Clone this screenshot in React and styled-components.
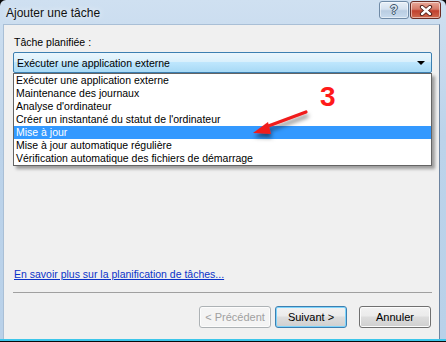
import React from 'react'
import styled, { createGlobalStyle } from 'styled-components';

const Global = createGlobalStyle`
    html, body {
        margin: 0;
        padding: 0;
        background: #0a0a0a;
    }
    body {
        width: 446px;
        height: 342px;
        overflow: hidden;
        font-family: "Liberation Sans", Arial, sans-serif;
    }
`;

const Window = styled.div`
    width: 446px;
    height: 339px;
    display: flex;
    flex-direction: column;
    background: linear-gradient(180deg, #cfe0f1 0%, #bcd3ea 40%, #b9d1e9 100%);
    border-bottom: 2px solid #3cc6ea;
    border-radius: 6px 6px 0 0;
`;

const TitleBar = styled.div`
    height: 24px;
    display: flex;
    align-items: flex-start;
    padding-left: 6px;
`;

const Title = styled.div`
    font-size: 12px;
    color: #111;
    margin-top: 6px;
    text-shadow: 0 0 6px rgba(255, 255, 255, 0.9);
`;

const Caption = styled.div`
    margin-left: auto;
    margin-right: 5px;
    margin-top: 1px;
    display: flex;
    gap: 1px;
`;

const CaptionButton = styled.div`
    height: 18px;
    width: ${p => p.$wide ? '31px' : '30px'};
    border: 1px solid ${p => p.$close ? '#6b2c24' : '#6f8aa6'};
    border-radius: 3px;
    box-sizing: border-box;
    display: flex;
    align-items: center;
    justify-content: center;
    background: ${p => p.$close
        ? 'linear-gradient(180deg, #e9a99a 0%, #d57a68 45%, #c1412f 55%, #cf6a4f 100%)'
        : 'linear-gradient(180deg, #e8f0f8 0%, #d4e1ef 45%, #b9cde2 55%, #c8dbee 100%)'};
    box-shadow: inset 0 0 0 1px rgba(255,255,255,0.5);
`;

const Help = styled.span`
    font-size: 12px;
    font-weight: bold;
    color: #dfe9f4;
    text-shadow: 0 0 1px #44576b, 1px 0 0 #44576b, -1px 0 0 #44576b, 0 1px 0 #44576b, 0 -1px 0 #44576b;
    line-height: 1;
`;

const Client = styled.div`
    flex: 1;
    margin: 0 6px 0 3px;
    background: #f0f0f0;
    border-left: 1px solid #a9bfd6;
    border-right: 1px solid #6d84a0;
    border-top: 1px solid #a9bfd6;
    display: flex;
    flex-direction: column;
    padding: 11px 7px 11px 9px;
    font-size: 10.5px;
    color: #000;
`;

const Top = styled.div`
    position: relative;
`;

const Label = styled.div`
    line-height: 13px;
    margin-left: 1px;
    margin-bottom: 3px;
`;

const Combo = styled.div`
    position: relative;
`;

const Select = styled.div`
    height: 21px;
    box-sizing: border-box;
    border: 1px solid #3c7fb1;
    border-radius: 2px;
    background: linear-gradient(180deg, #eaf6fd 0%, #d9f0fc 45%, #bee6fd 50%, #a7d9f5 100%);
    display: flex;
    align-items: center;
    padding: 0 6px 0 3px;
`;

const Arrow = styled.span`
    margin-left: auto;
    width: 0;
    height: 0;
    border-left: 4px solid transparent;
    border-right: 4px solid transparent;
    border-top: 4px solid #000;
`;

const List = styled.div`
    position: absolute;
    top: 100%;
    left: 0;
    right: 0;
    background: #fff;
    border: 1px solid #646464;
    box-shadow: 3px 3px 3px rgba(0, 0, 0, 0.35);
    z-index: 2;
`;

const Item = styled.div`
    height: 13px;
    line-height: 13px;
    padding-left: 2px;
    white-space: nowrap;
    background: ${p => p.$selected ? '#3399ff' : 'transparent'};
    color: ${p => p.$selected ? '#fff' : '#000'};
`;

const Spacer = styled.div`
    flex: 1;
`;

const Link = styled.a`
    color: #0b33c8;
    text-decoration: underline;
    line-height: 13px;
    margin-left: 1px;
    cursor: pointer;
`;

const Separator = styled.div`
    border-top: 1px solid #a0a0a0;
    margin: 11px 0 13px;
`;

const Buttons = styled.div`
    display: flex;
    justify-content: flex-end;
    padding-right: 1px;
`;

const Button = styled.button`
    height: 22px;
    width: 72px;
    margin-left: ${p => p.$gap || 0}px;
    padding: 0;
    font-family: "Liberation Sans", Arial, sans-serif;
    font-size: 11px;
    color: ${p => p.disabled ? '#a0a0a0' : '#000'};
    border-radius: 3px;
    border: 1px solid ${p => p.disabled ? '#adb2b5' : p.$default ? '#3c7fb1' : '#707070'};
    background: ${p => p.disabled
        ? '#f4f4f4'
        : 'linear-gradient(180deg, #f2f2f2 0%, #ebebeb 45%, #dddddd 50%, #cfcfcf 100%)'};
    box-shadow: ${p => p.$default ? 'inset 0 0 0 1px #7fd4fb' : 'inset 0 0 0 1px #fcfcfc'};
`;

const Mark = styled.div`
    position: absolute;
    left: 307px;
    top: 47px;
    font-size: 28px;
    font-weight: bold;
    color: #ff1a1a;
    line-height: 1;
    z-index: 3;
`;

const Pointer = styled.svg`
    position: absolute;
    left: 228px;
    top: 76px;
    z-index: 3;
    overflow: visible;
`;

const items = [
    'Exécuter une application externe',
    'Maintenance des journaux',
    "Analyse d'ordinateur",
    "Créer un instantané du statut de l'ordinateur",
    'Mise à jour',
    'Mise à jour automatique régulière',
    'Vérification automatique des fichiers de démarrage',
];

const App = () => {
  return (
    <>
    <Global />
    <Window>
        <TitleBar>
            <Title>Ajouter une tâche</Title>
            <Caption>
                <CaptionButton><Help>?</Help></CaptionButton>
                <CaptionButton $close $wide>
                    <svg width="14" height="11" viewBox="0 0 14 11">
                        <path d="M3 2 L11 9 M11 2 L3 9" stroke="#4a1a14" strokeWidth="4.2" strokeLinecap="round" />
                        <path d="M3 2 L11 9 M11 2 L3 9" stroke="#fff" strokeWidth="2.4" strokeLinecap="round" />
                    </svg>
                </CaptionButton>
            </Caption>
        </TitleBar>
        <Client>
            <Top>
                <Label>Tâche planifiée :</Label>
                <Combo>
                    <Select>
                        Exécuter une application externe
                        <Arrow />
                    </Select>
                    <List>
                        {items.map((t, i) => (
                            <Item key={t} $selected={i === 4}>{t}</Item>
                        ))}
                    </List>
                </Combo>
                <Mark>3</Mark>
                <Pointer width="70" height="40" viewBox="0 0 70 40">
                    <defs>
                        <filter id="sh" x="-30%" y="-30%" width="160%" height="180%">
                            <feDropShadow dx="1" dy="4" stdDeviation="2" floodColor="#000" floodOpacity="0.5" />
                        </filter>
                    </defs>
                    <g filter="url(#sh)">
                        <path d="M65 0 L22 16" stroke="#f01c1c" strokeWidth="3.2" strokeLinecap="round" />
                        <path d="M12 21 L27 10 L30 22 Z" fill="#f01c1c" />
                    </g>
                </Pointer>
            </Top>
            <Spacer />
            <Link>En savoir plus sur la planification de tâches...</Link>
            <Separator />
            <Buttons>
                <Button disabled>&lt; Précédent</Button>
                <Button $default $gap={4}>Suivant &gt;</Button>
                <Button $gap={12}>Annuler</Button>
            </Buttons>
        </Client>
    </Window>
    </>
  )
}

export default App
